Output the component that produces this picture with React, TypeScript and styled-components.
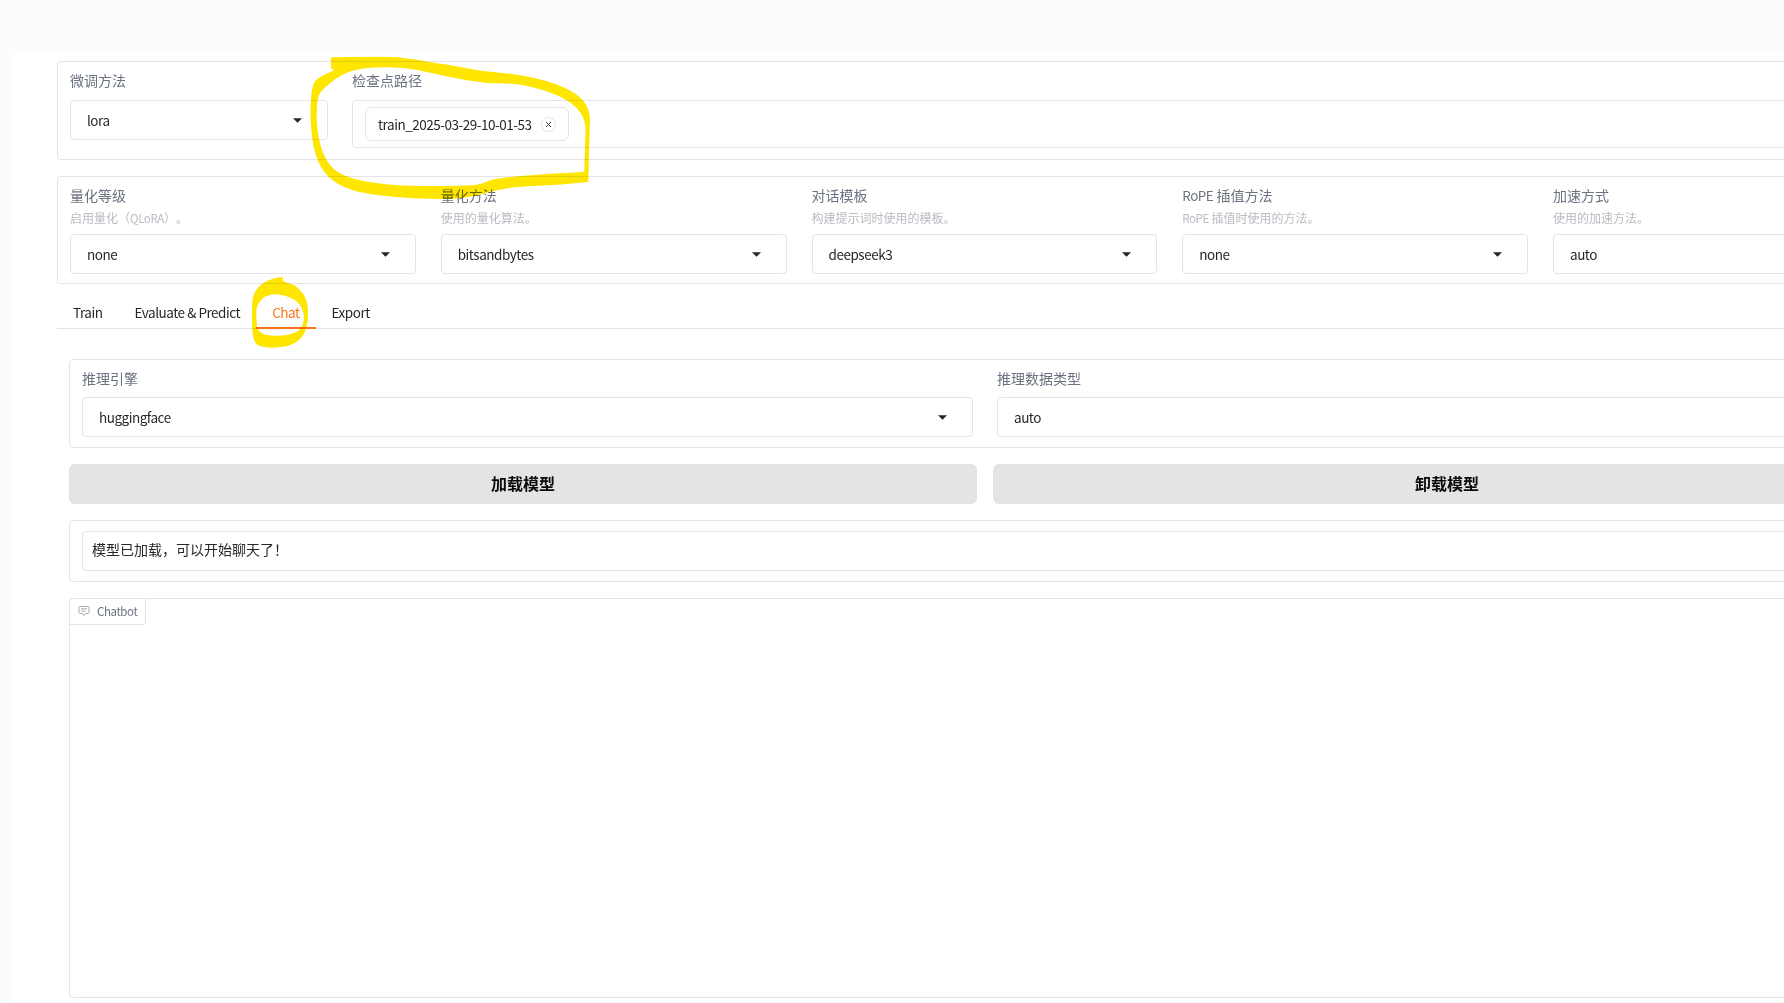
import React from "react";
import styled, { createGlobalStyle } from "styled-components";

const Global = createGlobalStyle`
  html, body { margin: 0; padding: 0; background: #fbfcfe; overflow: hidden; }
  body {
    font-family: "Noto Sans CJK SC", "Noto Sans", sans-serif;
    color: #27272a;
    text-spacing-trim: space-all;
  }
`;

const Shell = styled.div`
  position: relative;
  width: 1784px;
  height: 1003px;
  box-sizing: border-box;
  padding: 53px 0 1px 12px;
  overflow: hidden;
  background: #fbfcfe;
`;

const Main = styled.main`
  height: 949px;
  box-sizing: border-box;
  padding: 8px 0 0 45px;
  background: #fff;
  overflow: hidden;
`;

const Content = styled.div`
  width: 1856px;
  display: flex;
  flex-direction: column;
`;

const PanelStack = styled.div`
  display: flex;
  flex-direction: column;
  gap: 16px;
`;

const Panel = styled.section<{ $height: number; $top?: number }>`
  height: ${(p) => p.$height}px;
  box-sizing: border-box;
  border: 1px solid #e4e4e7;
  border-radius: 4px;
  padding: ${(p) => p.$top ?? 8}px 12px 0;
  background: #fff;
`;

const TopRow = styled.div`
  display: grid;
  grid-template-columns: 258px 1547px;
  column-gap: 24px;
`;

const FiveColumns = styled.div`
  display: grid;
  grid-template-columns: repeat(5, 345.75px);
  column-gap: 25px;
`;

const TwoColumns = styled.div`
  display: grid;
  grid-template-columns: 891px 891px;
  column-gap: 24px;
`;

const Field = styled.div`
  display: flex;
  flex-direction: column;
  min-width: 0;
`;

const Label = styled.label<{ $gap?: number }>`
  font-size: 14px;
  line-height: 20px;
  color: #6b7280;
  margin-bottom: ${(p) => p.$gap ?? 10}px;
`;

const Hint = styled.div`
  font-size: 12px;
  line-height: 20px;
  color: #b8bbc1;
  margin: -7px 0 6px;
`;

/* The Latin runs of the reference are set tighter than the CJK around them. */
const Latin = styled.span`
  font-size: 0.96em;
  letter-spacing: -0.035em;
`;

const SelectBox = styled.div`
  height: 40px;
  box-sizing: border-box;
  display: flex;
  align-items: center;
  justify-content: space-between;
  border: 1px solid #e4e4e7;
  border-radius: 4px;
  padding: 0 25px 0 16px;
  font-size: 13.5px;
  letter-spacing: -0.035em;
  color: #27272a;
  background: #fff;
`;

const TagsBox = styled.div`
  height: 48px;
  box-sizing: border-box;
  display: flex;
  align-items: flex-start;
  padding: 6px 12px;
  border: 1px solid #e4e4e7;
  border-radius: 4px;
`;

const Chip = styled.div`
  height: 34px;
  box-sizing: border-box;
  display: flex;
  align-items: center;
  gap: 9px;
  padding: 0 12px;
  border: 1px solid #e4e4e7;
  border-radius: 6px;
  font-size: 13.5px;
  letter-spacing: -0.035em;
  color: #27272a;
`;

const ChipClose = styled.span`
  width: 15px;
  height: 15px;
  box-sizing: border-box;
  display: flex;
  align-items: center;
  justify-content: center;
  border: 1px solid #e4e4e7;
  border-radius: 50%;
  color: #3f3f46;
`;

const TabBar = styled.nav`
  height: 45px;
  box-sizing: border-box;
  display: flex;
  align-items: flex-end;
  border-bottom: 1px solid #e4e4e7;
`;

const Tab = styled.div<{ $active?: boolean }>`
  height: 38px;
  box-sizing: border-box;
  display: flex;
  align-items: center;
  margin-bottom: -1px;
  padding: 6px 16px 0;
  font-size: 13.5px;
  letter-spacing: -0.035em;
  color: ${(p) => (p.$active ? "#f97316" : "#27272a")};
  border-bottom: 2px solid ${(p) => (p.$active ? "#f97316" : "transparent")};
`;

const TabBody = styled.div`
  display: flex;
  flex-direction: column;
  gap: 16px;
  padding: 30px 12px 0;
`;

const ButtonRow = styled.div`
  display: grid;
  grid-template-columns: 908px 908px;
  column-gap: 16px;
`;

const BigButton = styled.button`
  height: 40px;
  border: none;
  border-radius: 6px;
  background: #e4e4e7;
  color: #0a0a0a;
  font: 700 16px "Noto Sans CJK SC", sans-serif;
  padding: 0 0 2px;
`;

const OutputBox = styled.div`
  height: 40px;
  box-sizing: border-box;
  display: flex;
  align-items: center;
  padding: 0 9px 5px;
  border: 1px solid #e4e4e7;
  border-radius: 4px;
  font-size: 14px;
  color: #27272a;
`;

const ChatPanel = styled.section`
  height: 400px;
  box-sizing: border-box;
  border: 1px solid #e4e4e7;
  border-radius: 4px;
  background: #fff;
`;

const ChatTag = styled.div`
  width: 76px;
  height: 26px;
  box-sizing: border-box;
  display: flex;
  align-items: center;
  gap: 7px;
  padding: 0 0 2px 8px;
  border-right: 1px solid #e4e4e7;
  border-bottom: 1px solid #e4e4e7;
  border-radius: 0 0 4px 0;
  font-size: 11.5px;
  letter-spacing: -0.035em;
  color: #6b7280;
`;

const Highlight = styled.svg<{ $x: number; $y: number }>`
  position: absolute;
  left: ${(p) => p.$x}px;
  top: ${(p) => p.$y}px;
  mix-blend-mode: multiply;
  pointer-events: none;
`;

type Pt = [number, number];

// Rounded closed contour through the midpoints of the given hand-traced points.
const contour = (pts: Pt[]) => {
  const mid = (a: Pt, b: Pt): Pt => [(a[0] + b[0]) / 2, (a[1] + b[1]) / 2];
  const start = mid(pts[pts.length - 1], pts[0]);
  let d = `M${start[0]},${start[1]}`;
  pts.forEach((p, i) => {
    const m = mid(p, pts[(i + 1) % pts.length]);
    d += ` Q${p[0]},${p[1]} ${m[0]},${m[1]}`;
  });
  return d + " Z";
};

const bigOuter: Pt[] = [
  [93, 22], [93, 22], [200, 20], [300, 20], [400, 38], [450, 45], [550, 65], [650, 72], [750, 95], [830, 128],
  [872, 180], [868, 260], [865, 395], [865, 395], [780, 405], [650, 410], [580, 422], [520, 440], [450, 448],
  [340, 445], [220, 435], [130, 415], [70, 370], [40, 300], [30, 200], [35, 110], [50, 85], [110, 58], [93, 57],
  [93, 57],
];
const bigInner: Pt[] = [
  [150, 55], [300, 50], [400, 70], [450, 82], [550, 100], [650, 100], [750, 125], [820, 160], [858, 210],
  [855, 280], [853, 365], [853, 365], [700, 375], [580, 385], [540, 405], [450, 408], [300, 408], [190, 395],
  [110, 370], [70, 320], [50, 240], [50, 150], [65, 118],
];
const smallOuter: Pt[] = [
  [113, 20], [113, 20], [113, 35], [150, 45], [175, 70], [188, 100], [190, 150], [178, 195], [150, 222], [110, 233],
  [45, 233], [22, 210], [20, 110], [25, 70], [50, 40], [85, 25],
];
const smallInner: Pt[] = [
  [35, 105], [60, 78], [65, 80], [80, 72], [120, 75], [160, 95], [178, 130], [175, 165], [160, 185], [120, 198],
  [70, 197], [38, 185], [33, 140],
];

const Caret = () => (
  <svg width="9" height="5" viewBox="0 0 9 5">
    <path d="M0.5 0.5 H8.5 L4.5 4.5 Z" fill="#27272a" stroke="#27272a" strokeWidth="0.5" strokeLinejoin="round" />
  </svg>
);

const Select = ({ value, caret = true }: { value: string; caret?: boolean }) => (
  <SelectBox>
    <span>{value}</span>
    {caret && <Caret />}
  </SelectBox>
);

const ChatIcon = () => (
  <svg width="12" height="12" viewBox="0 0 12 12" fill="none" stroke="#a8adb5" strokeWidth="1">
    <path d="M2 1.5 H10 A1 1 0 0 1 11 2.5 V7.5 A1 1 0 0 1 10 8.5 H7.5 L6 10.5 L4.5 8.5 H2 A1 1 0 0 1 1 7.5 V2.5 A1 1 0 0 1 2 1.5 Z" />
    <path d="M3 3.8 H9 M3 6 H7.5" />
  </svg>
);

const quantFields: { id: string; label: React.ReactNode; hint: React.ReactNode; value: string; caret?: boolean }[] = [
  { id: "level", label: "量化等级", hint: <>启用量化（<Latin>QLoRA</Latin>）。</>, value: "none" },
  { id: "method", label: "量化方法", hint: "使用的量化算法。", value: "bitsandbytes" },
  { id: "template", label: "对话模板", hint: "构建提示词时使用的模板。", value: "deepseek3" },
  { id: "rope", label: <><Latin>RoPE</Latin> 插值方法</>, hint: <><Latin>RoPE</Latin> 插值时使用的方法。</>, value: "none" },
  { id: "accel", label: "加速方式", hint: "使用的加速方法。", value: "auto", caret: false },
];

const tabs = ["Train", "Evaluate & Predict", "Chat", "Export"];

export default function App() {
  return (
    <>
      <Global />
      <Shell>
        <Main>
          <Content>
            <PanelStack>
              <Panel $height={99}>
                <TopRow>
                  <Field>
                    <Label>微调方法</Label>
                    <Select value="lora" />
                  </Field>
                  <Field>
                    <Label>检查点路径</Label>
                    <TagsBox>
                      <Chip>
                        train_2025-03-29-10-01-53
                        <ChipClose>
                          <svg width="7" height="7" viewBox="0 0 7 7" stroke="currentColor" strokeWidth="1">
                            <path d="M1 1 L6 6 M6 1 L1 6" />
                          </svg>
                        </ChipClose>
                      </Chip>
                    </TagsBox>
                  </Field>
                </TopRow>
              </Panel>
              <Panel $height={108}>
                <FiveColumns>
                  {quantFields.map((f) => (
                    <Field key={f.id}>
                      <Label>{f.label}</Label>
                      <Hint>{f.hint}</Hint>
                      <Select value={f.value} caret={f.caret !== false} />
                    </Field>
                  ))}
                </FiveColumns>
              </Panel>
            </PanelStack>
            <TabBar>
              {tabs.map((t) => (
                <Tab key={t} $active={t === "Chat"}>
                  {t}
                </Tab>
              ))}
            </TabBar>
            <TabBody>
              <Panel $height={89}>
                <TwoColumns>
                  <Field>
                    <Label $gap={9}>推理引擎</Label>
                    <Select value="huggingface" />
                  </Field>
                  <Field>
                    <Label $gap={9}>推理数据类型</Label>
                    <Select value="auto" caret={false} />
                  </Field>
                </TwoColumns>
              </Panel>
              <ButtonRow>
                <BigButton>加载模型</BigButton>
                <BigButton>卸载模型</BigButton>
              </ButtonRow>
              <Panel $height={62} $top={10}>
                <OutputBox>模型已加载，可以开始聊天了！</OutputBox>
              </Panel>
              <ChatPanel>
                <ChatTag>
                  <ChatIcon />
                  Chatbot
                </ChatTag>
              </ChatPanel>
            </TabBody>
          </Content>
        </Main>
        <Highlight $x={300} $y={50} width="300" height="150" viewBox="0 0 900 450">
          <path fill="#ffe600" fillRule="evenodd" d={contour(bigOuter) + " " + contour(bigInner)} />
        </Highlight>
        <Highlight $x={245} $y={270} width="70" height="85" viewBox="0 0 210 255">
          <path fill="#ffe600" fillRule="evenodd" d={contour(smallOuter) + " " + contour(smallInner)} />
        </Highlight>
      </Shell>
    </>
  );
}
